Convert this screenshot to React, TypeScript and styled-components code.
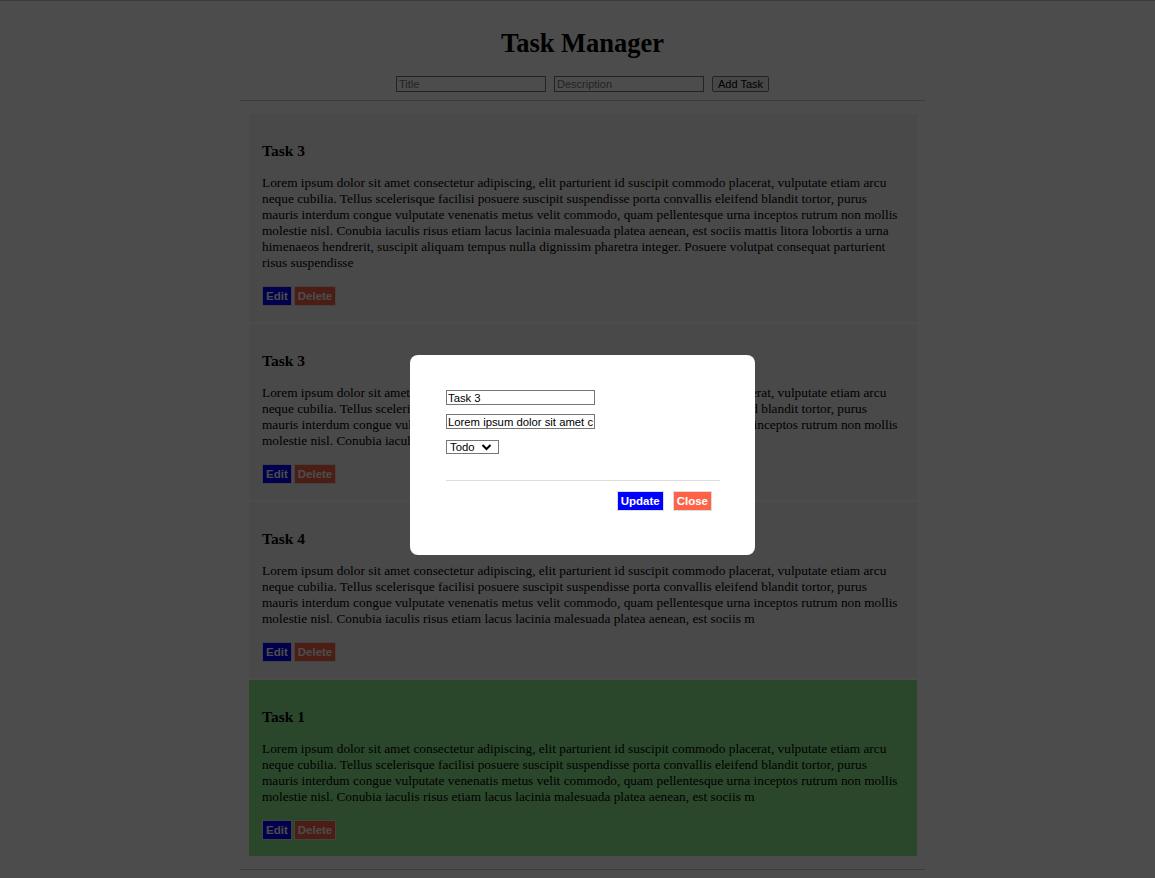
import styled, { createGlobalStyle } from "styled-components";

type Task = {
    id: number;
    title: string;
    description: string;
    status: "Todo" | "Done";
};

const LONG_TEXT =
    "Lorem ipsum dolor sit amet consectetur adipiscing, elit parturient id suscipit commodo placerat, vulputate etiam arcu neque cubilia. Tellus scelerisque facilisi posuere suscipit suspendisse porta convallis eleifend blandit tortor, purus mauris interdum congue vulputate venenatis metus velit commodo, quam pellentesque urna inceptos rutrum non mollis molestie nisl. Conubia iaculis risus etiam lacus lacinia malesuada platea aenean, est sociis mattis litora lobortis a urna himenaeos hendrerit, suscipit aliquam tempus nulla dignissim pharetra integer. Posuere volutpat consequat parturient risus suspendisse";

const SHORT_TEXT =
    "Lorem ipsum dolor sit amet consectetur adipiscing, elit parturient id suscipit commodo placerat, vulputate etiam arcu neque cubilia. Tellus scelerisque facilisi posuere suscipit suspendisse porta convallis eleifend blandit tortor, purus mauris interdum congue vulputate venenatis metus velit commodo, quam pellentesque urna inceptos rutrum non mollis molestie nisl. Conubia iaculis risus etiam lacus lacinia malesuada platea aenean, est sociis m";

const tasks: Task[] = [
    { id: 1, title: "Task 3", description: LONG_TEXT, status: "Todo" },
    { id: 2, title: "Task 3", description: SHORT_TEXT, status: "Todo" },
    { id: 3, title: "Task 4", description: SHORT_TEXT, status: "Todo" },
    { id: 4, title: "Task 1", description: SHORT_TEXT, status: "Done" },
];

const GlobalStyle = createGlobalStyle`
    body {
        margin: 0;
        background: #ffffff;
        font-family: "Liberation Serif", "Times New Roman", serif;
        color: #000000;
        border-top: 1px solid #c4c4c4;
    }
`;

const Page = styled.div`
    width: 685px;
    margin-left: 240px;
`;

const Header = styled.header`
    text-align: center;
    padding-bottom: 8px;
    border-bottom: 1px solid #c8c8c8;
`;

const Title = styled.h1`
    font-size: 26.5px;
    line-height: 30px;
    font-weight: bold;
    margin: 27px 0 18px;
`;

const AddRow = styled.div`
    display: flex;
    justify-content: center;
    gap: 8px;
`;

const TextInput = styled.input`
    box-sizing: border-box;
    width: 150px;
    height: 16px;
    padding: 0 2px;
    font-family: "Liberation Sans", Arial, sans-serif;
    font-size: 11px;
    border: 1px solid #767676;
    border-radius: 0;
    background: #ffffff;
    color: #000000;
    outline: none;

    &::placeholder {
        color: #757575;
    }
`;

const AddButton = styled.button`
    box-sizing: border-box;
    width: 57px;
    height: 16px;
    padding: 0;
    font-family: "Liberation Sans", Arial, sans-serif;
    font-size: 11px;
    border: 1px solid #767676;
    border-radius: 2px;
    background: #efefef;
    color: #000000;
`;

const TaskList = styled.div`
    display: flex;
    flex-direction: column;
    gap: 2px;
    margin: 13px 8px 13px 9px;
`;

const Card = styled.div<{ $done: boolean }>`
    background-color: ${(p) => (p.$done ? "#90ee90" : "#f5f5f5")};
    padding: 13px 13px 16px;
`;

const CardTitle = styled.h3`
    font-size: 15.5px;
    line-height: 17px;
    font-weight: bold;
    margin: 15px 0 16px;
`;

const CardText = styled.p`
    font-size: 13.33px;
    line-height: 16px;
    margin: 0 5px 15px 0;
`;

const ButtonRow = styled.div`
    display: flex;
    gap: 2px;
`;

const ActionButton = styled.button<{ $kind: "blue" | "red" }>`
    box-sizing: border-box;
    height: 20px;
    padding: 0 3px;
    font-family: "Liberation Sans", Arial, sans-serif;
    font-size: 11.5px;
    font-weight: bold;
    color: #ffffff;
    background-color: ${(p) => (p.$kind === "blue" ? "#0000ff" : "#ff6347")};
    border: 1px solid #dddddd;
    border-radius: 0;
`;

const Footer = styled.div`
    border-top: 1px solid #c8c8c8;
    height: 20px;
`;

const Overlay = styled.div`
    position: fixed;
    inset: 0;
    background: rgba(0, 0, 0, 0.7);
    display: flex;
    justify-content: center;
    align-items: flex-start;
    padding: 355px 0 0 10px;
`;

const Modal = styled.div`
    width: 345px;
    box-sizing: border-box;
    background: #ffffff;
    border-radius: 8px;
    padding: 35px 35px 44px 36px;
`;

const Fields = styled.div`
    display: flex;
    flex-direction: column;
    align-items: flex-start;
    gap: 9px;
    padding-bottom: 26px;
    border-bottom: 1px solid #dddddd;
`;

const ModalInput = styled(TextInput)`
    width: 149px;
    height: 15px;
    padding: 0 1px;
    font-size: 11.3px;
`;

const SelectWrap = styled.div`
    position: relative;
    margin-top: 2px;
`;

const StatusSelect = styled.select`
    appearance: none;
    display: block;
    box-sizing: border-box;
    width: 53px;
    height: 14px;
    padding: 0 0 0 3px;
    font-family: "Liberation Sans", Arial, sans-serif;
    font-size: 11.3px;
    line-height: 12px;
    border: 1px solid #767676;
    border-radius: 0;
    background: #ffffff;
    color: #000000;
`;

const Chevron = styled.svg`
    position: absolute;
    left: 35px;
    top: 3px;
    width: 11px;
    height: 8px;
    pointer-events: none;
`;

const ModalButtons = styled.div`
    display: flex;
    justify-content: flex-end;
    gap: 9px;
    padding: 10px 8px 0 0;
`;

export default function App() {
    const editing = tasks[0];

    return (
        <>
            <GlobalStyle />
            <Page>
                <Header>
                    <Title>Task Manager</Title>
                    <AddRow>
                        <TextInput placeholder="Title" />
                        <TextInput placeholder="Description" />
                        <AddButton>Add Task</AddButton>
                    </AddRow>
                </Header>
                <TaskList>
                    {tasks.map((task) => (
                        <Card key={task.id} $done={task.status === "Done"}>
                            <CardTitle>{task.title}</CardTitle>
                            <CardText>{task.description}</CardText>
                            <ButtonRow>
                                <ActionButton $kind="blue">Edit</ActionButton>
                                <ActionButton $kind="red">Delete</ActionButton>
                            </ButtonRow>
                        </Card>
                    ))}
                </TaskList>
                <Footer />
            </Page>
            <Overlay>
                <Modal>
                    <Fields>
                        <ModalInput defaultValue={editing.title} />
                        <ModalInput defaultValue={editing.description} />
                        <SelectWrap>
                            <StatusSelect defaultValue="Todo">
                                <option>Todo</option>
                                <option>Done</option>
                            </StatusSelect>
                            <Chevron viewBox="0 0 11 8">
                                <path
                                    d="M1.5 2 L5.5 6 L9.5 2"
                                    fill="none"
                                    stroke="#000"
                                    strokeWidth="2"
                                />
                            </Chevron>
                        </SelectWrap>
                    </Fields>
                    <ModalButtons>
                        <ActionButton $kind="blue">Update</ActionButton>
                        <ActionButton $kind="red">Close</ActionButton>
                    </ModalButtons>
                </Modal>
            </Overlay>
        </>
    );
}
